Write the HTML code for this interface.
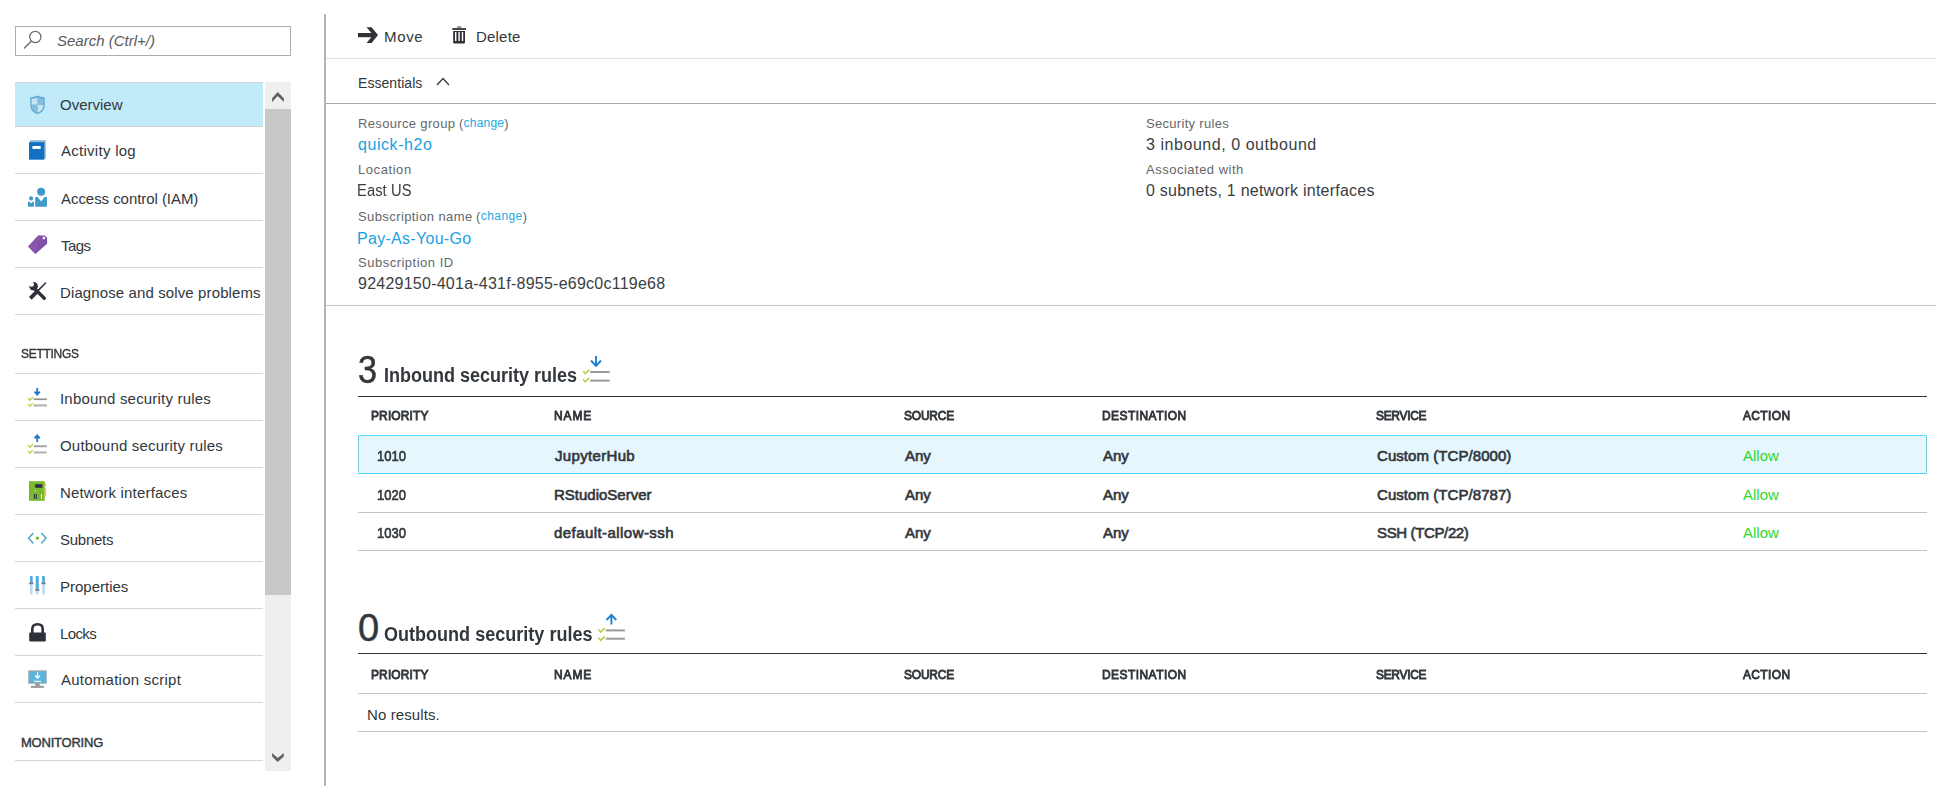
<!DOCTYPE html>
<html><head><meta charset="utf-8"><style>
html,body{margin:0;padding:0;background:#fff;width:1946px;height:794px;overflow:hidden;position:relative;}
body{font-family:"Liberation Sans",sans-serif;}
.t{position:absolute;white-space:nowrap;}
.a{position:absolute;}
</style></head><body>
<!-- search box -->
<div class="a" style="left:15px;top:26px;width:274px;height:28px;border:1px solid #acacac;"></div>
<svg class="a" style="left:20px;top:28px" width="26" height="26" viewBox="0 0 26 26">
  <circle cx="15.3" cy="9" r="5.6" fill="none" stroke="#6a6a6a" stroke-width="1.2"/>
  <line x1="11.2" y1="13.2" x2="4.4" y2="20" stroke="#6a6a6a" stroke-width="1.3" stroke-linecap="round"/>
</svg>

<!-- nav highlight -->
<div class="a" style="left:15px;top:82px;width:248px;height:43px;background:#c1ebf8;border-top:1px solid #d4d4d4;border-bottom:1px solid #d4d4d4;"></div>
<!-- nav separators -->
<div class="a" style="left:15px;top:173px;width:248px;height:1px;background:#d6d6d6"></div>
<div class="a" style="left:15px;top:220px;width:248px;height:1px;background:#d6d6d6"></div>
<div class="a" style="left:15px;top:267px;width:248px;height:1px;background:#d6d6d6"></div>
<div class="a" style="left:15px;top:314px;width:248px;height:1px;background:#d6d6d6"></div>
<div class="a" style="left:15px;top:373px;width:248px;height:1px;background:#d6d6d6"></div>
<div class="a" style="left:15px;top:420px;width:248px;height:1px;background:#d6d6d6"></div>
<div class="a" style="left:15px;top:467px;width:248px;height:1px;background:#d6d6d6"></div>
<div class="a" style="left:15px;top:514px;width:248px;height:1px;background:#d6d6d6"></div>
<div class="a" style="left:15px;top:561px;width:248px;height:1px;background:#d6d6d6"></div>
<div class="a" style="left:15px;top:608px;width:248px;height:1px;background:#d6d6d6"></div>
<div class="a" style="left:15px;top:655px;width:248px;height:1px;background:#d6d6d6"></div>
<div class="a" style="left:15px;top:702px;width:248px;height:1px;background:#d6d6d6"></div>
<div class="a" style="left:15px;top:760px;width:248px;height:1px;background:#d6d6d6"></div>

<!-- scrollbar -->
<div class="a" style="left:265px;top:82px;width:26px;height:689px;background:#efefef"></div>
<div class="a" style="left:265px;top:109px;width:26px;height:486px;background:#c8c8c8"></div>
<svg class="a" style="left:262px;top:80px" width="32" height="32" viewBox="0 0 32 32">
  <path d="M15.7 11.9 L21.8 18.3 V22 L15.7 16.1 L10.1 22 V18.3 Z" fill="#606060"/>
</svg>
<svg class="a" style="left:262px;top:742px" width="32" height="32" viewBox="0 0 32 32">
  <path d="M10.1 10.9 L15.7 16.1 L21.8 10.9 V14.5 L15.7 20 L10.1 14.5 Z" fill="#606060"/>
</svg>

<!-- vertical divider -->
<div class="a" style="left:324px;top:14px;width:2px;height:772px;background:#b4b4b4"></div>

<!-- main lines -->
<div class="a" style="left:326px;top:58px;width:1610px;height:1px;background:#e0e0e0"></div>
<div class="a" style="left:326px;top:103px;width:1610px;height:1px;background:#a9a9a9"></div>
<div class="a" style="left:326px;top:305px;width:1610px;height:1px;background:#c6c6c6"></div>

<!-- toolbar icons -->
<svg class="a" style="left:352px;top:20px" width="30" height="30" viewBox="0 0 30 30">
  <rect x="6" y="13" width="16" height="4.2" fill="#2f3338"/>
  <path d="M14.6 7.3 H19.6 L26 15.1 L19.6 22.9 H14.6 L21 15.1 Z" fill="#2f3338"/>
</svg>
<svg class="a" style="left:450px;top:25px" width="18" height="20" viewBox="0 0 18 20">
  <rect x="2.3" y="3" width="13.7" height="2" fill="#43474b"/>
  <rect x="7.2" y="1.2" width="4.1" height="1.8" fill="#8a8d90"/>
  <path d="M3.2 5.9 H15 V17.3 Q15 18.5 13.8 18.5 H4.4 Q3.2 18.5 3.2 17.3 Z" fill="#2f3338"/>
  <rect x="5" y="7" width="1.4" height="9" fill="#fff"/>
  <rect x="8.4" y="7" width="1.4" height="9" fill="#fff"/>
  <rect x="11.8" y="7" width="1.4" height="9" fill="#fff"/>
</svg>
<!-- essentials chevron -->
<svg class="a" style="left:434px;top:74px" width="18" height="14" viewBox="0 0 18 14">
  <path d="M3 11 L9 4.5 L15 11" fill="none" stroke="#3a3e42" stroke-width="1.4"/>
</svg>

<!-- inbound table -->
<div class="a" style="left:358px;top:396px;width:1569px;height:1px;background:#2f3338"></div>
<div class="a" style="left:358px;top:435px;width:1569px;height:39px;background:#e5f6fc;"></div>
<div class="a" style="left:358px;top:435px;width:1569px;height:1px;background:repeating-linear-gradient(90deg,#3ec2ec 0 1px,#bcd6dc 1px 2px);"></div>
<div class="a" style="left:358px;top:473px;width:1569px;height:1px;background:repeating-linear-gradient(90deg,#3ec2ec 0 1px,#bcd6dc 1px 2px);"></div>
<div class="a" style="left:358px;top:435px;width:1px;height:39px;background:repeating-linear-gradient(180deg,#3ec2ec 0 1px,#bcd6dc 1px 2px);"></div>
<div class="a" style="left:1926px;top:435px;width:1px;height:39px;background:repeating-linear-gradient(180deg,#3ec2ec 0 1px,#bcd6dc 1px 2px);"></div>
<div class="a" style="left:358px;top:512px;width:1569px;height:1px;background:#c4c4c4"></div>
<div class="a" style="left:358px;top:550px;width:1569px;height:1px;background:#c4c4c4"></div>

<!-- outbound table -->
<div class="a" style="left:358px;top:653px;width:1569px;height:1px;background:#2f3338"></div>
<div class="a" style="left:358px;top:693px;width:1569px;height:1px;background:#c4c4c4"></div>
<div class="a" style="left:358px;top:731px;width:1569px;height:1px;background:#c4c4c4"></div>

<!-- heading icons -->
<svg class="a" style="left:575px;top:350px" width="40" height="40" viewBox="0 0 40 40">
  <path d="M21 6 V15.5 M16 10.5 L21 15.8 L26 10.5" fill="none" stroke="#1e7fd0" stroke-width="1.9"/>
  <path d="M8.2 21 L10.3 23.6 L14.4 19.6" fill="none" stroke="#b0d040" stroke-width="1.5"/>
  <path d="M8.2 29.3 L10.3 31.9 L14.4 27.9" fill="none" stroke="#b0d040" stroke-width="1.5"/>
  <rect x="15.2" y="21" width="19.5" height="2" fill="#999"/>
  <rect x="15.2" y="29.6" width="19.5" height="2" fill="#999"/>
</svg>
<svg class="a" style="left:590px;top:608px" width="40" height="40" viewBox="0 0 40 40">
  <path d="M21.4 16.5 V7 M16.5 12 L21.4 6.8 L26.3 12" fill="none" stroke="#1e7fd0" stroke-width="1.9"/>
  <path d="M8.6 21.5 L10.7 24.1 L14.8 20.1" fill="none" stroke="#b0d040" stroke-width="1.5"/>
  <path d="M8.6 29.8 L10.7 32.4 L14.8 28.4" fill="none" stroke="#b0d040" stroke-width="1.5"/>
  <rect x="15.9" y="21.4" width="19" height="2" fill="#999"/>
  <rect x="15.9" y="29.7" width="19" height="2" fill="#999"/>
</svg>

<!-- nav icons -->
<!-- shield -->
<svg class="a" style="left:22px;top:88px" width="30" height="30" viewBox="0 0 30 30">
  <path d="M15.5 7.5 Q12 9.5 8.3 9.3 V17.5 Q8.3 23.5 15.5 26.3 Q22.7 23.5 22.7 17.5 V9.3 Q19 9.5 15.5 7.5 Z" fill="#5aaad6"/>
  <path d="M15.5 9.2 Q12.6 10.8 9.6 10.7 V16.8 H15.5 Z" fill="#c9e5f2"/>
  <path d="M15.5 16.8 H21.4 V17.5 Q21.4 22.4 15.5 24.8 Z" fill="#c9e5f2"/>
  <path d="M15.5 9.2 Q18.4 10.8 21.4 10.7 V16.8 H15.5 Z" fill="#86c0e0"/>
  <path d="M15.5 16.8 H9.6 V17.5 Q9.6 22.4 15.5 24.8 Z" fill="#86c0e0"/>
</svg>
<!-- book -->
<svg class="a" style="left:22px;top:135px" width="30" height="30" viewBox="0 0 30 30">
  <rect x="8" y="5.2" width="15.8" height="18.7" fill="#8fb8dc"/>
  <rect x="7" y="7.2" width="15.3" height="17.5" fill="#1470c4"/>
  <rect x="10.4" y="11" width="8.3" height="2.9" fill="#fff"/>
</svg>
<!-- access control -->
<svg class="a" style="left:22px;top:182px" width="30" height="30" viewBox="0 0 30 30">
  <circle cx="19.1" cy="9.8" r="4" fill="#3d9ac8"/>
  <path d="M13.2 15.1 H15.6 L19.2 19.6 L22.5 15.1 H24.9 V24.7 H13.2 Z" fill="#3d9ac8"/>
  <circle cx="9.1" cy="16.4" r="2.1" fill="#3d9ac8"/>
  <path d="M6 19.8 H7.6 L9 21.5 L10.4 19.8 H11.9 V24.7 H6 Z" fill="#3d9ac8"/>
</svg>
<!-- tag -->
<svg class="a" style="left:22px;top:229px" width="30" height="30" viewBox="0 0 30 30">
  <path d="M6 17.4 L16.2 6.4 H22.7 L25.1 8.7 V14.7 L13.4 24.9 Z" fill="#8050a8"/>
  <path d="M6 17.4 L16.2 6.4 H19 L13.4 24.9 Z" fill="#8a5cb0" opacity="0.6"/>
  <circle cx="21.9" cy="9.1" r="1.3" fill="#fff"/>
</svg>
<!-- tools -->
<svg class="a" style="left:22px;top:276px" width="30" height="30" viewBox="0 0 30 30">
  <defs><mask id="wm"><rect width="30" height="30" fill="#fff"/><circle cx="9.4" cy="8.3" r="2.5" fill="#000"/><path d="M4 8 L9.4 8.3 L8 3 Z" fill="#000"/></mask></defs>
  <path d="M23.6 7 L15.5 15.1" stroke="#2d3038" stroke-width="1.5" stroke-linecap="round"/>
  <path d="M15.2 15.4 L8.3 22.3" stroke="#2d3038" stroke-width="3.8" stroke-linecap="butt"/>
  <path d="M13.6 13.6 L22.3 22.3" stroke="#2d3038" stroke-width="3.4" stroke-linecap="round"/>
  <circle cx="11.6" cy="10.3" r="4.3" fill="#2d3038" mask="url(#wm)"/>
</svg>
<!-- inbound -->
<svg class="a" style="left:22px;top:383px" width="30" height="30" viewBox="0 0 30 30">
  <path d="M15.2 5 V11.5 M12.6 8.6 L15.2 11.6 L17.8 8.6" fill="none" stroke="#1e7acc" stroke-width="1.8"/>
  <path d="M6.2 15.3 L7.9 17.2 L10.8 14.2" fill="none" stroke="#b5d03c" stroke-width="1.3"/>
  <path d="M6.2 21.2 L7.9 23.1 L10.8 20.1" fill="none" stroke="#b5d03c" stroke-width="1.3"/>
  <rect x="11.5" y="15.4" width="13.5" height="1.7" fill="#939393"/>
  <rect x="11.5" y="21.3" width="13.5" height="2.2" fill="#b4b4b4"/>
</svg>
<!-- outbound -->
<svg class="a" style="left:22px;top:430px" width="30" height="30" viewBox="0 0 30 30">
  <path d="M15.2 12 V5.5 M12.6 8.4 L15.2 5.4 L17.8 8.4" fill="none" stroke="#1e7acc" stroke-width="1.8"/>
  <path d="M6.2 15.3 L7.9 17.2 L10.8 14.2" fill="none" stroke="#b5d03c" stroke-width="1.3"/>
  <path d="M6.2 21.2 L7.9 23.1 L10.8 20.1" fill="none" stroke="#b5d03c" stroke-width="1.3"/>
  <rect x="11.8" y="15.3" width="13" height="1.9" fill="#a0a0a0"/>
  <rect x="11.8" y="21.4" width="13" height="2.1" fill="#b4b4b4"/>
</svg>
<!-- network interface -->
<svg class="a" style="left:22px;top:477px" width="30" height="30" viewBox="0 0 30 30">
  <rect x="7" y="4.2" width="15.7" height="19.6" fill="#7cb82f"/>
  <rect x="13.2" y="7.2" width="7.2" height="3.6" fill="#2d3142"/>
  <rect x="22.7" y="6" width="1.4" height="3.3" fill="#f5c518"/>
  <rect x="22.7" y="11.3" width="1.4" height="8.2" fill="#f5c518"/>
  <rect x="11.9" y="17" width="1.1" height="4.9" fill="#2d3142"/>
  <rect x="13.8" y="17" width="1.1" height="4.9" fill="#2d3142"/>
  <rect x="18.9" y="17.2" width="1.1" height="4.5" fill="#e8f0d8"/>
  <rect x="12.8" y="13.2" width="1" height="1.3" fill="#e8f0d8"/>
</svg>
<!-- subnets -->
<svg class="a" style="left:22px;top:524px" width="30" height="30" viewBox="0 0 30 30">
  <path d="M11.3 9.1 L6.6 14 L11.3 19.5" fill="none" stroke="#5aaad4" stroke-width="1.6"/>
  <path d="M19.3 9.1 L24 14 L19.3 19.5" fill="none" stroke="#5aaad4" stroke-width="1.6"/>
  <rect x="14" y="12.8" width="2.8" height="2.6" fill="#6bb820"/>
</svg>
<!-- properties -->
<svg class="a" style="left:22px;top:571px" width="30" height="30" viewBox="0 0 30 30">
  <rect x="8" y="5.1" width="2.6" height="18.3" fill="#b8dcf0"/>
  <rect x="8" y="5.1" width="2.6" height="6.5" fill="#4aaade"/>
  <rect x="13.8" y="5.1" width="2.8" height="18.3" fill="#b8dcf0"/>
  <rect x="13.8" y="5.1" width="2.8" height="13" fill="#4aaade"/>
  <rect x="20.2" y="5.1" width="2.6" height="18.3" fill="#b8dcf0"/>
  <rect x="20.2" y="5.1" width="2.6" height="6.5" fill="#4aaade"/>
  <rect x="7.2" y="11.5" width="4.2" height="1.7" fill="#7a7a7a"/>
  <rect x="13.2" y="18.2" width="4.2" height="1.7" fill="#7a7a7a"/>
  <rect x="19.4" y="11.5" width="4.2" height="1.7" fill="#7a7a7a"/>
</svg>
<!-- lock -->
<svg class="a" style="left:22px;top:618px" width="30" height="30" viewBox="0 0 30 30">
  <path d="M10.3 15 V11 Q10.3 6.3 15.5 6.3 Q20.7 6.3 20.7 11 V15" fill="none" stroke="#2d3038" stroke-width="2.6"/>
  <rect x="7.2" y="14.6" width="16.6" height="8.8" rx="1" fill="#2d3038"/>
</svg>
<!-- automation -->
<svg class="a" style="left:22px;top:665px" width="30" height="30" viewBox="0 0 30 30">
  <rect x="6.2" y="5.3" width="18.5" height="13.4" fill="#a8a8a8"/>
  <rect x="7.2" y="6.4" width="17" height="11.7" fill="#5ab4dc"/>
  <path d="M15.5 7.2 V12.8 M13 10.6 L15.5 13.2 L18 10.6" fill="none" stroke="#fff" stroke-width="1.3"/>
  <rect x="12.1" y="15.8" width="6.8" height="1.1" fill="#fff"/>
  <rect x="13.2" y="18.7" width="4.6" height="2" fill="#8f8f8f"/>
  <rect x="9" y="20.8" width="12.9" height="2.1" fill="#9a9a9a"/>
</svg>

<div class="t" id="t0" style="left:57px;top:33px;font-size:15px;line-height:15px;color:#5a5a5a;font-style:italic;letter-spacing:0.000px;">Search (Ctrl+/)</div>
<div class="t" id="t1" style="left:60.0px;top:97px;font-size:15px;line-height:15px;color:#32373c;letter-spacing:0.000px;">Overview</div>
<div class="t" id="t2" style="left:61.0px;top:143px;font-size:15px;line-height:15px;color:#32373c;letter-spacing:0.273px;">Activity log</div>
<div class="t" id="t3" style="left:61.0px;top:191px;font-size:15px;line-height:15px;color:#32373c;letter-spacing:-0.053px;">Access control (IAM)</div>
<div class="t" id="t4" style="left:61.0px;top:238px;font-size:15px;line-height:15px;color:#32373c;letter-spacing:-0.533px;">Tags</div>
<div class="t" id="t5" style="left:60.0px;top:285px;font-size:15px;line-height:15px;color:#32373c;letter-spacing:0.115px;">Diagnose and solve problems</div>
<div class="t" id="t6" style="left:60.0px;top:391px;font-size:15px;line-height:15px;color:#32373c;letter-spacing:0.190px;">Inbound security rules</div>
<div class="t" id="t7" style="left:60.0px;top:438px;font-size:15px;line-height:15px;color:#32373c;letter-spacing:0.200px;">Outbound security rules</div>
<div class="t" id="t8" style="left:60.0px;top:485px;font-size:15px;line-height:15px;color:#32373c;letter-spacing:0.176px;">Network interfaces</div>
<div class="t" id="t9" style="left:60.0px;top:532px;font-size:15px;line-height:15px;color:#32373c;letter-spacing:-0.250px;">Subnets</div>
<div class="t" id="t10" style="left:60.0px;top:579px;font-size:15px;line-height:15px;color:#32373c;letter-spacing:0.000px;">Properties</div>
<div class="t" id="t11" style="left:60.0px;top:626px;font-size:15px;line-height:15px;color:#32373c;letter-spacing:-0.625px;">Locks</div>
<div class="t" id="t12" style="left:61.0px;top:672px;font-size:15px;line-height:15px;color:#32373c;letter-spacing:0.250px;">Automation script</div>
<div class="t" id="t13" style="left:21px;top:347px;font-size:13px;line-height:13px;color:#32373c;-webkit-text-stroke:0.4px #32373c;letter-spacing:-0.286px;transform:scaleX(0.92);transform-origin:0 0;">SETTINGS</div>
<div class="t" id="t14" style="left:21px;top:736px;font-size:13px;line-height:13px;color:#32373c;-webkit-text-stroke:0.4px #32373c;letter-spacing:-0.222px;">MONITORING</div>
<div class="t" id="t15" style="left:384px;top:29px;font-size:15px;line-height:15px;color:#32373c;letter-spacing:0.667px;">Move</div>
<div class="t" id="t16" style="left:476px;top:29px;font-size:15px;line-height:15px;color:#32373c;letter-spacing:0.200px;">Delete</div>
<div class="t" id="t17" style="left:358.0px;top:76px;font-size:14px;line-height:14px;color:#32373c;letter-spacing:0.056px;">Essentials</div>
<div class="t" id="t18" style="left:358.0px;top:117px;font-size:13px;line-height:13px;color:#63676b;letter-spacing:0.346px;">Resource group</div>
<div class="t" id="t19" style="left:459.0px;top:117px;font-size:13px;line-height:13px;color:#63676b;letter-spacing:0.214px;">(<span style="color:#25a8e0;font-size:12px;position:relative;top:-1px">change</span>)</div>
<div class="t" id="t20" style="left:358.0px;top:137px;font-size:16px;line-height:16px;color:#1ba1e2;letter-spacing:0.562px;">quick-h2o</div>
<div class="t" id="t21" style="left:358.0px;top:163px;font-size:13px;line-height:13px;color:#63676b;letter-spacing:0.571px;">Location</div>
<div class="t" id="t22" style="left:357.0px;top:183px;font-size:16px;line-height:16px;color:#3a3e42;letter-spacing:0.083px;transform:scaleX(0.92);transform-origin:0 0;">East US</div>
<div class="t" id="t23" style="left:358.0px;top:210px;font-size:13px;line-height:13px;color:#63676b;letter-spacing:0.406px;">Subscription name</div>
<div class="t" id="t24" style="left:476.0px;top:210px;font-size:13px;line-height:13px;color:#63676b;letter-spacing:0.429px;">(<span style="color:#25a8e0;font-size:12px;position:relative;top:-1px">change</span>)</div>
<div class="t" id="t25" style="left:357.0px;top:231px;font-size:16px;line-height:16px;color:#1ba1e2;letter-spacing:0.292px;">Pay-As-You-Go</div>
<div class="t" id="t26" style="left:358.0px;top:256px;font-size:13px;line-height:13px;color:#63676b;letter-spacing:0.500px;">Subscription ID</div>
<div class="t" id="t27" style="left:358.0px;top:276px;font-size:16px;line-height:16px;color:#3a3e42;letter-spacing:0.243px;">92429150-401a-431f-8955-e69c0c119e68</div>
<div class="t" id="t28" style="left:1146px;top:117px;font-size:13px;line-height:13px;color:#63676b;letter-spacing:0.308px;">Security rules</div>
<div class="t" id="t29" style="left:1146px;top:137px;font-size:16px;line-height:16px;color:#3a3e42;letter-spacing:0.550px;">3 inbound, 0 outbound</div>
<div class="t" id="t30" style="left:1146px;top:163px;font-size:13px;line-height:13px;color:#63676b;letter-spacing:0.500px;">Associated with</div>
<div class="t" id="t31" style="left:1146px;top:183px;font-size:16px;line-height:16px;color:#3a3e42;letter-spacing:0.233px;">0 subnets, 1 network interfaces</div>
<div class="t" id="t32" style="left:358px;top:351px;font-size:38px;line-height:38px;color:#32373c;-webkit-text-stroke:0.5px #32373c;transform:scaleX(0.9);transform-origin:0 0;">3</div>
<div class="t" id="t33" style="left:384px;top:365px;font-size:20px;line-height:20px;color:#32373c;font-weight:700;letter-spacing:0.000px;transform:scaleX(0.9);transform-origin:0 0;">Inbound security rules</div>
<div class="t" id="t34" style="left:371.0px;top:409px;font-size:13px;line-height:13px;color:#32373c;-webkit-text-stroke:0.9px #32373c;letter-spacing:0.143px;transform:scaleX(0.92);transform-origin:0 0;">PRIORITY</div>
<div class="t" id="t35" style="left:554px;top:409px;font-size:13px;line-height:13px;color:#32373c;-webkit-text-stroke:0.9px #32373c;letter-spacing:1.000px;transform:scaleX(0.92);transform-origin:0 0;">NAME</div>
<div class="t" id="t36" style="left:904px;top:409px;font-size:13px;line-height:13px;color:#32373c;-webkit-text-stroke:0.9px #32373c;letter-spacing:-0.200px;transform:scaleX(0.92);transform-origin:0 0;">SOURCE</div>
<div class="t" id="t37" style="left:1102.0px;top:409px;font-size:13px;line-height:13px;color:#32373c;-webkit-text-stroke:0.9px #32373c;letter-spacing:0.500px;transform:scaleX(0.92);transform-origin:0 0;">DESTINATION</div>
<div class="t" id="t38" style="left:1376.0px;top:409px;font-size:13px;line-height:13px;color:#32373c;-webkit-text-stroke:0.9px #32373c;letter-spacing:-0.333px;transform:scaleX(0.92);transform-origin:0 0;">SERVICE</div>
<div class="t" id="t39" style="left:1743.0px;top:409px;font-size:13px;line-height:13px;color:#32373c;-webkit-text-stroke:0.9px #32373c;letter-spacing:0.400px;transform:scaleX(0.92);transform-origin:0 0;">ACTION</div>
<div class="t" id="t40" style="left:377.0px;top:448px;font-size:15px;line-height:15px;color:#32373c;-webkit-text-stroke:0.65px #32373c;letter-spacing:0.000px;transform:scaleX(0.87);transform-origin:0 0;">1010</div>
<div class="t" id="t41" style="left:555px;top:448px;font-size:15px;line-height:15px;color:#32373c;-webkit-text-stroke:0.65px #32373c;letter-spacing:0.333px;">JupyterHub</div>
<div class="t" id="t42" style="left:905px;top:448px;font-size:15px;line-height:15px;color:#32373c;-webkit-text-stroke:0.65px #32373c;letter-spacing:0.000px;">Any</div>
<div class="t" id="t43" style="left:1103.0px;top:448px;font-size:15px;line-height:15px;color:#32373c;-webkit-text-stroke:0.65px #32373c;letter-spacing:0.000px;">Any</div>
<div class="t" id="t44" style="left:1377.0px;top:448px;font-size:15px;line-height:15px;color:#32373c;-webkit-text-stroke:0.65px #32373c;letter-spacing:0.062px;">Custom (TCP/8000)</div>
<div class="t" id="t45" style="left:1743.0px;top:448px;font-size:15px;line-height:15px;color:#2ed82e;letter-spacing:0.000px;">Allow</div>
<div class="t" id="t46" style="left:377.0px;top:487px;font-size:15px;line-height:15px;color:#32373c;-webkit-text-stroke:0.65px #32373c;letter-spacing:0.000px;transform:scaleX(0.87);transform-origin:0 0;">1020</div>
<div class="t" id="t47" style="left:554px;top:487px;font-size:15px;line-height:15px;color:#32373c;-webkit-text-stroke:0.65px #32373c;letter-spacing:0.000px;">RStudioServer</div>
<div class="t" id="t48" style="left:905px;top:487px;font-size:15px;line-height:15px;color:#32373c;-webkit-text-stroke:0.65px #32373c;letter-spacing:0.000px;">Any</div>
<div class="t" id="t49" style="left:1103.0px;top:487px;font-size:15px;line-height:15px;color:#32373c;-webkit-text-stroke:0.65px #32373c;letter-spacing:0.000px;">Any</div>
<div class="t" id="t50" style="left:1377.0px;top:487px;font-size:15px;line-height:15px;color:#32373c;-webkit-text-stroke:0.65px #32373c;letter-spacing:0.062px;">Custom (TCP/8787)</div>
<div class="t" id="t51" style="left:1743.0px;top:487px;font-size:15px;line-height:15px;color:#2ed82e;letter-spacing:0.000px;">Allow</div>
<div class="t" id="t52" style="left:377.0px;top:525px;font-size:15px;line-height:15px;color:#32373c;-webkit-text-stroke:0.65px #32373c;letter-spacing:0.000px;transform:scaleX(0.87);transform-origin:0 0;">1030</div>
<div class="t" id="t53" style="left:554px;top:525px;font-size:15px;line-height:15px;color:#32373c;-webkit-text-stroke:0.65px #32373c;letter-spacing:0.438px;">default-allow-ssh</div>
<div class="t" id="t54" style="left:905px;top:525px;font-size:15px;line-height:15px;color:#32373c;-webkit-text-stroke:0.65px #32373c;letter-spacing:0.000px;">Any</div>
<div class="t" id="t55" style="left:1103.0px;top:525px;font-size:15px;line-height:15px;color:#32373c;-webkit-text-stroke:0.65px #32373c;letter-spacing:0.000px;">Any</div>
<div class="t" id="t56" style="left:1377.0px;top:525px;font-size:15px;line-height:15px;color:#32373c;-webkit-text-stroke:0.65px #32373c;letter-spacing:-0.364px;">SSH (TCP/22)</div>
<div class="t" id="t57" style="left:1743.0px;top:525px;font-size:15px;line-height:15px;color:#2ed82e;letter-spacing:0.000px;">Allow</div>
<div class="t" id="t58" style="left:358.0px;top:609px;font-size:38px;line-height:38px;color:#32373c;-webkit-text-stroke:0.5px #32373c;">0</div>
<div class="t" id="t59" style="left:384.0px;top:624px;font-size:20px;line-height:20px;color:#32373c;font-weight:700;letter-spacing:0.023px;transform:scaleX(0.9);transform-origin:0 0;">Outbound security rules</div>
<div class="t" id="t60" style="left:371.0px;top:668px;font-size:13px;line-height:13px;color:#32373c;-webkit-text-stroke:0.9px #32373c;letter-spacing:0.143px;transform:scaleX(0.92);transform-origin:0 0;">PRIORITY</div>
<div class="t" id="t61" style="left:554px;top:668px;font-size:13px;line-height:13px;color:#32373c;-webkit-text-stroke:0.9px #32373c;letter-spacing:1.000px;transform:scaleX(0.92);transform-origin:0 0;">NAME</div>
<div class="t" id="t62" style="left:904px;top:668px;font-size:13px;line-height:13px;color:#32373c;-webkit-text-stroke:0.9px #32373c;letter-spacing:-0.200px;transform:scaleX(0.92);transform-origin:0 0;">SOURCE</div>
<div class="t" id="t63" style="left:1102.0px;top:668px;font-size:13px;line-height:13px;color:#32373c;-webkit-text-stroke:0.9px #32373c;letter-spacing:0.500px;transform:scaleX(0.92);transform-origin:0 0;">DESTINATION</div>
<div class="t" id="t64" style="left:1376.0px;top:668px;font-size:13px;line-height:13px;color:#32373c;-webkit-text-stroke:0.9px #32373c;letter-spacing:-0.333px;transform:scaleX(0.92);transform-origin:0 0;">SERVICE</div>
<div class="t" id="t65" style="left:1743.0px;top:668px;font-size:13px;line-height:13px;color:#32373c;-webkit-text-stroke:0.9px #32373c;letter-spacing:0.400px;transform:scaleX(0.92);transform-origin:0 0;">ACTION</div>
<div class="t" id="t66" style="left:367.0px;top:707px;font-size:15px;line-height:15px;color:#32373c;letter-spacing:0.100px;">No results.</div>
</body></html>
